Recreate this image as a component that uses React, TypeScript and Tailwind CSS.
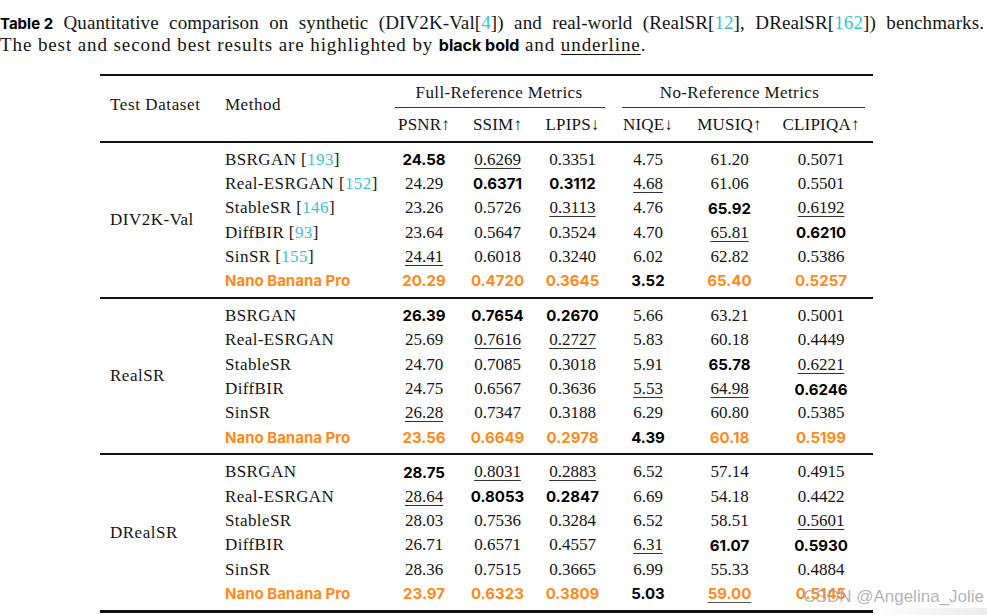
import React from 'react';

type Cell = [string, string?];

const groups: { name: string; rows: { m: string; c?: string; v: Cell[] }[] }[] = [
  {
    name: 'DIV2K-Val',
    rows: [
      { m: 'BSRGAN', c: '193', v: [['24.58', 'b'], ['0.6269', 'u'], ['0.3351'], ['4.75'], ['61.20'], ['0.5071']] },
      { m: 'Real-ESRGAN', c: '152', v: [['24.29'], ['0.6371', 'b'], ['0.3112', 'b'], ['4.68', 'u'], ['61.06'], ['0.5501']] },
      { m: 'StableSR', c: '146', v: [['23.26'], ['0.5726'], ['0.3113', 'u'], ['4.76'], ['65.92', 'b'], ['0.6192', 'u']] },
      { m: 'DiffBIR', c: '93', v: [['23.64'], ['0.5647'], ['0.3524'], ['4.70'], ['65.81', 'u'], ['0.6210', 'b']] },
      { m: 'SinSR', c: '155', v: [['24.41', 'u'], ['0.6018'], ['0.3240'], ['6.02'], ['62.82'], ['0.5386']] },
      { m: 'Nano Banana Pro', v: [['20.29', 'o'], ['0.4720', 'o'], ['0.3645', 'o'], ['3.52', 'b'], ['65.40', 'o'], ['0.5257', 'o']] },
    ],
  },
  {
    name: 'RealSR',
    rows: [
      { m: 'BSRGAN', v: [['26.39', 'b'], ['0.7654', 'b'], ['0.2670', 'b'], ['5.66'], ['63.21'], ['0.5001']] },
      { m: 'Real-ESRGAN', v: [['25.69'], ['0.7616', 'u'], ['0.2727', 'u'], ['5.83'], ['60.18'], ['0.4449']] },
      { m: 'StableSR', v: [['24.70'], ['0.7085'], ['0.3018'], ['5.91'], ['65.78', 'b'], ['0.6221', 'u']] },
      { m: 'DiffBIR', v: [['24.75'], ['0.6567'], ['0.3636'], ['5.53', 'u'], ['64.98', 'u'], ['0.6246', 'b']] },
      { m: 'SinSR', v: [['26.28', 'u'], ['0.7347'], ['0.3188'], ['6.29'], ['60.80'], ['0.5385']] },
      { m: 'Nano Banana Pro', v: [['23.56', 'o'], ['0.6649', 'o'], ['0.2978', 'o'], ['4.39', 'b'], ['60.18', 'o'], ['0.5199', 'o']] },
    ],
  },
  {
    name: 'DRealSR',
    rows: [
      { m: 'BSRGAN', v: [['28.75', 'b'], ['0.8031', 'u'], ['0.2883', 'u'], ['6.52'], ['57.14'], ['0.4915']] },
      { m: 'Real-ESRGAN', v: [['28.64', 'u'], ['0.8053', 'b'], ['0.2847', 'b'], ['6.69'], ['54.18'], ['0.4422']] },
      { m: 'StableSR', v: [['28.03'], ['0.7536'], ['0.3284'], ['6.52'], ['58.51'], ['0.5601', 'u']] },
      { m: 'DiffBIR', v: [['26.71'], ['0.6571'], ['0.4557'], ['6.31', 'u'], ['61.07', 'b'], ['0.5930', 'b']] },
      { m: 'SinSR', v: [['28.36'], ['0.7515'], ['0.3665'], ['6.99'], ['55.33'], ['0.4884']] },
      { m: 'Nano Banana Pro', v: [['23.97', 'o'], ['0.6323', 'o'], ['0.3809', 'o'], ['5.03', 'b'], ['59.00', 'ou'], ['0.5145', 'o']] },
    ],
  },
];

const serif = "font-['Liberation_Serif',serif] text-[17px] text-[#141414]";
const sansBold = "font-['Inter',sans-serif] font-bold text-[15px]";
const cols = 'grid grid-cols-[173px_72px_75px_75px_76px_87px_96px]';
const cite = 'text-[#3cc3cf]';

function Value({ cell }: { cell: Cell }) {
  const [t, s] = cell;
  if (s === 'b') return <span className={`${sansBold} text-black`}>{t}</span>;
  if (s === 'o') return <span className={`${sansBold} text-[#ff8a1c]`}>{t}</span>;
  if (s === 'ou')
    return (
      <span className={`${sansBold} text-[#ff8a1c] underline decoration-1 underline-offset-[3px] decoration-[#555]`}>{t}</span>
    );
  if (s === 'u')
    return <span className={`${serif} underline decoration-1 underline-offset-[3px] decoration-[#333]`}>{t}</span>;
  return <span className={serif}>{t}</span>;
}

export default function App() {
  return (
    <div className="w-[987px] h-[615px] bg-white relative overflow-hidden">
      {/* caption */}
      <div className="pt-[12px] leading-[21px] font-['Liberation_Serif',serif] text-[19px] text-[#141414]">
        <div className="w-[984px] text-justify [text-align-last:justify] tracking-[0.1px]">
          <span className="inline-block font-['Inter',sans-serif] font-bold text-[15px] tracking-normal text-black">Table 2</span>{' '}
          Quantitative comparison on synthetic (DIV2K-Val[<span className={cite}>4</span>]) and real-world
          (RealSR[<span className={cite}>12</span>], DRealSR[<span className={cite}>162</span>]) benchmarks.
        </div>
        <div className="tracking-[0.9px]">
          The best and second best results are highlighted by{' '}
          <span className="font-['Inter',sans-serif] font-bold text-[16px] tracking-normal text-black">black bold</span> and{' '}
          <span className="underline decoration-1 underline-offset-[3px]">underline</span>.
        </div>
      </div>

      {/* table */}
      <div className="ml-[100px] mt-[18px] w-[773px]">
        <div className="h-[2px] bg-[#111]" />
        <div className="flex h-[65px]">
          <div className={`w-[115px] pl-[10px] pb-[8px] flex items-center tracking-[0.6px] ${serif}`}>Test Dataset</div>
          <div className="flex-1 flex flex-col">
            <div className="flex h-[32px]">
              <div className={`w-[173px] pl-[10px] pt-[16px] tracking-[0.5px] ${serif}`}>Method</div>
              <div className="w-[222px] flex flex-col">
                <div className={`flex-1 flex items-center justify-center pt-[3px] tracking-[0.4px] ${serif}`}>
                  Full-Reference Metrics
                </div>
                <div className="h-px bg-[#333] ml-[7px] mr-[5px]" />
              </div>
              <div className="w-[259px] flex flex-col">
                <div className={`flex-1 flex items-center justify-center pt-[3px] tracking-[0.4px] ${serif}`}>
                  No-Reference Metrics
                </div>
                <div className="h-px bg-[#333] ml-[12px] mr-[4px]" />
              </div>
            </div>
            <div className={`${cols} flex-1 items-center`}>
              <div />
              {['PSNR↑', 'SSIM↑', 'LPIPS↓', 'NIQE↓', 'MUSIQ↑', 'CLIPIQA↑'].map((h) => (
                <div key={h} className={`text-center tracking-[0.2px] ${serif}`}>
                  {h}
                </div>
              ))}
            </div>
          </div>
        </div>
        <div className="h-[1.5px] bg-[#111]" />

        {groups.map((g, gi) => (
          <div key={g.name}>
            <div className="flex py-[4px]">
              <div className={`w-[115px] pl-[10px] flex items-center tracking-[0.5px] ${serif}`}>{g.name}</div>
              <div className="flex-1">
                {g.rows.map((r) => (
                  <div key={r.m} className={`${cols} h-[24.4px] items-center`}>
                    <div className="pl-[10px] whitespace-nowrap">
                      {r.m === 'Nano Banana Pro' ? (
                        <span className={`${sansBold} text-[#ff8a1c]`}>{r.m}</span>
                      ) : (
                        <span className={`${serif} tracking-[0.4px]`}>
                          {r.m}
                          {r.c && (
                            <>
                              {' '}[<span className={cite}>{r.c}</span>]
                            </>
                          )}
                        </span>
                      )}
                    </div>
                    {r.v.map((cell, i) => (
                      <div key={i} className="text-center">
                        <Value cell={cell} />
                      </div>
                    ))}
                  </div>
                ))}
              </div>
            </div>
            <div className={gi === 2 ? 'h-[3px] bg-[#111]' : 'h-[2px] bg-[#111]'} />
          </div>
        ))}
      </div>

      {/* watermark */}
      <div className="absolute right-0 bottom-0 w-[114px] h-[7px] bg-gradient-to-r from-white to-[#ececec]" />
      <div className="absolute right-[3px] top-[584px] font-['Liberation_Sans',sans-serif] text-[17px] text-[#a0a0a0]/80">
        CSDN @Angelina_Jolie
      </div>
    </div>
  );
}
